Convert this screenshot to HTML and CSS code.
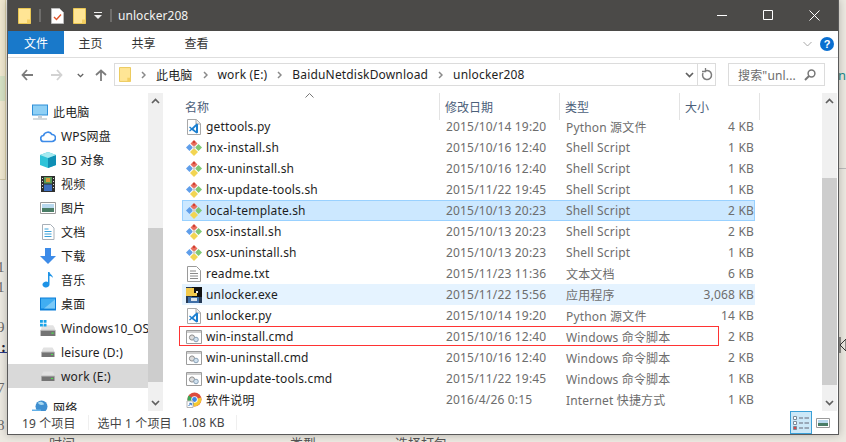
FILE: index.html
```html
<!DOCTYPE html>
<html lang="zh-CN">
<head>
<meta charset="utf-8">
<title>unlocker208</title>
<link rel="stylesheet" href="styles.css">
</head>
<body>
<svg class="defs" width="0" height="0" aria-hidden="true">
  <defs>
    <symbol id="i-folder" viewBox="0 0 13 16"><path d="M.5.5h12v15H.5z" fill="#ffe595" stroke="#e9c652"/><path d="M9 11.5h3.500v4H9z" fill="#f4cf62"/></symbol>
    <symbol id="i-sh" viewBox="0 0 16 16">
      <path d="M8 0 11.500 3.500 8 7 4.500 3.500z" fill="#e8705f"/><path d="M6.500 2 8 .5 9.500 2 8 3.500z" fill="#cf3a2e"/>
      <path d="M3.500 4 7 7.500 3.500 11 0 7.500z" fill="#5f9eea"/>
      <path d="M12.500 4 16 7.500 12.500 11 9 7.500z" fill="#7fc874"/>
      <path d="M8 8 12 12 8 16 4 12z" fill="#f2d552"/><path d="M8 5.500 10 7.500 8 9.500 6 7.500z" fill="#d0d0d0"/>
    </symbol>
    <symbol id="i-py" viewBox="0 0 14 16"><path d="M.5.5h9l4 4v11H.5z" fill="#fff" stroke="#a8a8a8"/><path d="M9 .5v4.500h4.500" fill="#eee" stroke="#a8a8a8"/><path d="M9.500 4.500 4.800 9 3 7.500 2 8.200 3.800 10 2 11.800l1 .7 1.800-1.500 4.700 3.500 1.500-.7V5.300z" fill="#1b7fd0"/><path d="M9 7.500 6.500 10 9 12z" fill="#fff"/></symbol>
    <symbol id="i-txt" viewBox="0 0 14 16"><path d="M.5.5h9l4 4v11H.5z" fill="#fff" stroke="#9a9a9a"/><path d="M3 5h6M3 7.500h8M3 10h8M3 12.500h8" stroke="#8a8a8a"/></symbol>
    <symbol id="i-cmd" viewBox="0 0 16 14"><path d="M.5.500h15v13H.5z" fill="#fff" stroke="#9c9c9c"/><path d="M1 1h14v2H1z" fill="#cfcfcf"/><circle cx="6" cy="7.500" r="2.600" fill="#dcdcdc" stroke="#8d8d8d"/><circle cx="10" cy="9.500" r="2.300" fill="#cfe0ee" stroke="#8aa0b4"/></symbol>
    <symbol id="i-exe" viewBox="0 0 16 16"><path d="M0 0h16v16H0z" fill="#263a55"/><path d="M6 0h10v10H6z" fill="#111"/><path d="M0 1h8v5h3v3H5l-2 0H0z" fill="#f2c94c"/><path d="M2 10h11v6H2z" fill="#3f6fa8"/><path d="M5 11h6v3H5z" fill="#d9e2ea"/><path d="M10 4h2v2h-2z" fill="#eee"/></symbol>
    <symbol id="i-chrome" viewBox="0 0 16 16"><circle cx="8.500" cy="7.500" r="7" fill="#dd4b3e"/><path d="M8.500 7.500 15 5.500A7 7 0 0 1 7 14.300z" fill="#f6c92f"/><path d="M8.500 7.500 7 14.300A7 7 0 0 1 2.700 3.500z" fill="#3aa757"/><circle cx="8.500" cy="7.500" r="3.200" fill="#fff"/><circle cx="8.500" cy="7.500" r="2.400" fill="#3f84e8"/><path d="M1 9h6v6.500H1z" fill="#fff" stroke="#b5b5b5"/><path d="M2.500 14 5 11.500M3.300 11.300H5.300V13.300" stroke="#2a6fc4" fill="none"/></symbol>
    <symbol id="i-drive" viewBox="0 0 14 10"><path d="M1 3 2.500 .5h9L13 3v6.500H1z" fill="#e2e2e2"/><path d="M.5 5h13v5H.5z" fill="#747474"/><path d="M.5 4.500h13v1H.5z" fill="#bdbdbd"/><path d="M10 7h2v1h-2z" fill="#4ee04e"/></symbol>
    <symbol id="i-chev-up" viewBox="0 0 9 6"><path d="M1 5 4.500 1.500 8 5" fill="none" stroke="#606060" stroke-width="1.700"/></symbol>
    <symbol id="i-chev-down" viewBox="0 0 9 6"><path d="M1 1 4.500 4.500 8 1" fill="none" stroke="#606060" stroke-width="1.700"/></symbol>
    <symbol id="i-crumb" viewBox="0 0 5 8"><path d="M1 1 4 4 1 7" fill="none" stroke="#8a8a8a" stroke-width="1.500"/></symbol>
  </defs>
</svg>

<div class="backdrop" aria-hidden="true">
  <span class="bd-panel"></span><span class="bd-green"></span>
  <span class="bd-c bd-1">1</span><span class="bd-c bd-2">1</span><span class="bd-c bd-3">9</span><span class="bd-c bd-4">:</span><span class="bd-c bd-5">7</span><span class="bd-c bd-6">8</span>
  <span class="bd-line"></span>
  <span class="bd-t bd-t1">时间</span><span class="bd-t bd-t2">类型</span><span class="bd-t bd-t3">选择打包</span>
  <span class="bd-teal">n</span><span class="bd-rule"></span>
  <svg class="bd-cursor" viewBox="0 0 8 16"><path d="M1 0v16M1 8l6-6M1 8l6 6M7 2v12" fill="none" stroke="#333"/></svg>
</div>

<div class="window">
  <header class="titlebar">
    <svg class="qa-folder"><use href="#i-folder"/></svg>
    <span class="qa-sep qa-sep-a"></span>
    <svg class="qa-doc" viewBox="0 0 13 16"><path d="M.5.500h8l4 4v11H.5z" fill="#fff" stroke="#bbb"/><path d="M3 9l2.500 2.500L10 6.500" fill="none" stroke="#e0562b" stroke-width="1.400"/></svg>
    <svg class="qa-folder2"><use href="#i-folder"/></svg>
    <svg class="qa-drop" viewBox="0 0 8 7"><path d="M0 0h8v1H0z" fill="#eee"/><path d="M0 3h8L4 7z" fill="#eee"/></svg>
    <span class="qa-sep qa-sep-b"></span>
    <span class="title-text">unlocker208</span>
    <span class="win-btns">
      <svg viewBox="0 0 11 11" class="wb"><path d="M0 5.500h10" stroke="#fff"/></svg>
      <svg viewBox="0 0 11 11" class="wb"><path d="M.5.500h9v9h-9z" fill="none" stroke="#fff"/></svg>
      <svg viewBox="0 0 11 11" class="wb"><path d="M.5.500l10 10M10.500.500l-10 10" stroke="#fff"/></svg>
    </span>
  </header>

  <nav class="tabs">
    <span class="tab tab-file">文件</span>
    <span class="tab">主页</span>
    <span class="tab">共享</span>
    <span class="tab">查看</span>
    <span class="ribbon-right">
      <svg class="ribbon-chev" viewBox="0 0 9 6"><path d="M.5 1 4.500 5 8.500 1" fill="none" stroke="#a8a8a8"/></svg>
      <span class="help">?</span>
    </span>
  </nav>

  <div class="addressbar">
    <svg class="nav-ic nav-back" viewBox="0 0 12 12"><path d="M6 1 1.500 6 6 11M1.500 6H12" fill="none" stroke="#7c7c7c" stroke-width="1.800"/></svg>
    <svg class="nav-ic nav-fwd" viewBox="0 0 12 12"><path d="M6 1 10.500 6 6 11M10.500 6H0" fill="none" stroke="#d2d2d2" stroke-width="1.800"/></svg>
    <svg class="nav-drop"><use href="#i-chev-down"/></svg>
    <svg class="nav-ic nav-up" viewBox="0 0 12 12"><path d="M1 6 6 1.500 11 6M6 1.500V12" fill="none" stroke="#7c7c7c" stroke-width="1.800"/></svg>
    <div class="addr">
      <svg class="addr-folder"><use href="#i-folder"/></svg>
      <svg class="crumb crumb-first"><use href="#i-crumb"/></svg>
      <span>此电脑</span>
      <svg class="crumb"><use href="#i-crumb"/></svg>
      <span>work (E:)</span>
      <svg class="crumb"><use href="#i-crumb"/></svg>
      <span>BaiduNetdiskDownload</span>
      <svg class="crumb"><use href="#i-crumb"/></svg>
      <span>unlocker208</span>
      <svg class="addr-drop"><use href="#i-chev-down"/></svg>
      <span class="addr-refresh"><svg viewBox="0 0 12 13"><path d="M4 3A4.500 4.500 0 1 1 2 5" fill="none" stroke="#7c7c7c" stroke-width="1.500"/><path d="M4.500 0v3.500H1" fill="none" stroke="#7c7c7c" stroke-width="1.300"/></svg></span>
    </div>
    <div class="search">
      <span>搜索"unl...</span>
      <svg viewBox="0 0 12 12"><circle cx="7.500" cy="4.500" r="3.400" fill="none" stroke="#777" stroke-width="1.500"/><path d="M5 7 1 11" stroke="#777" stroke-width="2"/></svg>
    </div>
  </div>

  <div class="content">
    <aside class="sidebar">
      <div class="side side-root"><svg class="s-ic" viewBox="0 0 16 15"><path d="M0 0h16v11H0z" fill="#2f8fd8"/><path d="M1 1h14v9H1z" fill="#8fd0f5"/><path d="M1 14h14v1H1z" fill="#a9b4bb"/><path d="M6 11h4v3H6z" fill="#c9d1d6"/></svg><span>此电脑</span></div>
      <div class="side"><svg class="s-ic" viewBox="0 0 16 13"><path d="M4 12a3 3 0 0 1-.5-6A4.700 4.700 0 0 1 12 5a3.500 3.500 0 0 1 0 7z" fill="none" stroke="#3d8be8" stroke-width="1.700"/></svg><span>WPS网盘</span></div>
      <div class="side"><svg class="s-ic" viewBox="0 0 16 16"><path d="M8 0 16 3v10l-8 3-8-3V3z" fill="#2fc3d8"/><path d="M8 6 16 3v10l-8 3z" fill="#0f8fb5"/><path d="M8 0 16 3 8 6 0 3z" fill="#a5eaf0"/></svg><span>3D 对象</span></div>
      <div class="side"><svg class="s-ic" viewBox="0 0 16 16"><path d="M1 0h14v16H1z" fill="#2f2f2f"/><path d="M4 1h8v6.500H4z" fill="#5a9a58"/><path d="M4 8.500h8V15H4z" fill="#3d6fc0"/><path d="M6 2h4v4H6z" fill="#d99a3a"/><path d="M2 2h1v1H2zM2 5h1v1H2zM2 8h1v1H2zM2 11h1v1H2zM13 2h1v1h-1zM13 5h1v1h-1zM13 8h1v1h-1zM13 11h1v1h-1z" fill="#ddd"/></svg><span>视频</span></div>
      <div class="side"><svg class="s-ic" viewBox="0 0 16 12"><path d="M.5.500h15v11H.5z" fill="#fff" stroke="#9a9a9a"/><path d="M2 2h12v4H2z" fill="#b8d8ee"/><path d="M2 6h12v4H2z" fill="#4a7d66"/></svg><span>图片</span></div>
      <div class="side"><svg class="s-ic" viewBox="0 0 14 16"><path d="M1.500.500h8l3.500 3.500v11.500H1.500z" fill="#fff" stroke="#a8b0b8"/><path d="M3.500 5h4M3.500 7.500h7M3.500 10h7M3.500 12.500h7" stroke="#3aa0d8"/></svg><span>文档</span></div>
      <div class="side"><svg class="s-ic" viewBox="0 0 16 16"><path d="M5 0h6v8h5l-8 8-8-8h5z" fill="#3d8be8"/></svg><span>下载</span></div>
      <div class="side"><svg class="s-ic" viewBox="0 0 16 16"><path d="M8 0h1.500c.3 2.500 3.500 3 3.500 6-1-1.500-2.500-2-3.500-2v8.500a3.500 3 0 1 1-1.500-2.400z" fill="#1e93e6"/></svg><span>音乐</span></div>
      <div class="side"><svg class="s-ic" viewBox="0 0 16 13"><path d="M0 0h16v13H0z" fill="#0c7fd8"/><path d="M1 1h14v10H1z" fill="#41aef2"/><path d="M4 11 15 2v9z" fill="#7dcaf7"/></svg><span>桌面</span></div>
      <div class="side"><svg class="s-ic" viewBox="0 0 14 14"><use href="#i-drive" y="4" height="10"/><path d="M0 0h2.500v2.500H0zM3.200 0h2.500v2.500H3.200zM0 3.200h2.500v2.500H0zM3.200 3.200h2.500v2.500H3.200z" fill="#17a2e8"/></svg><span>Windows10_OS</span></div>
      <div class="side"><svg class="s-ic s-drive" viewBox="0 0 14 10"><use href="#i-drive"/></svg><span>leisure (D:)</span></div>
      <div class="side side-sel"><svg class="s-ic s-drive" viewBox="0 0 14 10"><use href="#i-drive"/></svg><span>work (E:)</span></div>
      <div class="side side-root side-net"><svg class="s-ic" viewBox="0 0 16 15"><circle cx="9.500" cy="6" r="6" fill="#3f8fd0"/><path d="M6 2c3-2 6 0 6 2-3 1-6 0-6-2z" fill="#a8d8f0"/><path d="M0 9h9v5H0z" fill="#62b0e8"/></svg><span>网络</span></div>
    </aside>

    <div class="scrollbar scrollbar-side">
      <svg class="sb-arrow"><use href="#i-chev-up"/></svg>
      <span class="sb-thumb sb-thumb-side"></span>
      <svg class="sb-arrow sb-arrow-down"><use href="#i-chev-down"/></svg>
    </div>

    <main class="files">
      <div class="file-head">
        <span class="col col-name">名称<svg class="sort" viewBox="0 0 9 5"><path d="M.5 4.500 4.500.5 8.500 4.500" fill="none" stroke="#777"/></svg></span>
        <span class="col">修改日期</span>
        <span class="col">类型</span>
        <span class="col col-last">大小</span>
      </div>
      <div class="file-list">
        <div class="row"><span class="n"><svg class="f-ic"><use href="#i-py"/></svg>gettools.py</span><span class="d">2015/10/14 19:20</span><span class="t">Python 源文件</span><span class="s">4 KB</span></div>
        <div class="row"><span class="n"><svg class="f-ic"><use href="#i-sh"/></svg>lnx-install.sh</span><span class="d">2015/10/16 12:40</span><span class="t">Shell Script</span><span class="s">1 KB</span></div>
        <div class="row"><span class="n"><svg class="f-ic"><use href="#i-sh"/></svg>lnx-uninstall.sh</span><span class="d">2015/10/16 12:40</span><span class="t">Shell Script</span><span class="s">1 KB</span></div>
        <div class="row"><span class="n"><svg class="f-ic"><use href="#i-sh"/></svg>lnx-update-tools.sh</span><span class="d">2015/11/22 19:45</span><span class="t">Shell Script</span><span class="s">1 KB</span></div>
        <div class="row row-sel"><span class="n"><svg class="f-ic"><use href="#i-sh"/></svg>local-template.sh</span><span class="d">2015/10/13 20:23</span><span class="t">Shell Script</span><span class="s">2 KB</span></div>
        <div class="row"><span class="n"><svg class="f-ic"><use href="#i-sh"/></svg>osx-install.sh</span><span class="d">2015/10/13 20:23</span><span class="t">Shell Script</span><span class="s">2 KB</span></div>
        <div class="row"><span class="n"><svg class="f-ic"><use href="#i-sh"/></svg>osx-uninstall.sh</span><span class="d">2015/10/13 20:23</span><span class="t">Shell Script</span><span class="s">1 KB</span></div>
        <div class="row"><span class="n"><svg class="f-ic"><use href="#i-txt"/></svg>readme.txt</span><span class="d">2015/11/23 11:36</span><span class="t">文本文档</span><span class="s">6 KB</span></div>
        <div class="row row-hover"><span class="n"><svg class="f-ic"><use href="#i-exe"/></svg>unlocker.exe</span><span class="d">2015/11/22 15:56</span><span class="t">应用程序</span><span class="s">3,068 KB</span></div>
        <div class="row"><span class="n"><svg class="f-ic"><use href="#i-py"/></svg>unlocker.py</span><span class="d">2015/10/14 19:20</span><span class="t">Python 源文件</span><span class="s">14 KB</span></div>
        <div class="row row-mark"><span class="n"><svg class="f-ic"><use href="#i-cmd"/></svg>win-install.cmd</span><span class="d">2015/10/16 12:40</span><span class="t">Windows 命令脚本</span><span class="s">2 KB</span></div>
        <div class="row"><span class="n"><svg class="f-ic"><use href="#i-cmd"/></svg>win-uninstall.cmd</span><span class="d">2015/10/16 12:40</span><span class="t">Windows 命令脚本</span><span class="s">2 KB</span></div>
        <div class="row"><span class="n"><svg class="f-ic"><use href="#i-cmd"/></svg>win-update-tools.cmd</span><span class="d">2015/11/22 19:45</span><span class="t">Windows 命令脚本</span><span class="s">1 KB</span></div>
        <div class="row"><span class="n"><svg class="f-ic"><use href="#i-chrome"/></svg>软件说明</span><span class="d">2016/4/26 0:15</span><span class="t">Internet 快捷方式</span><span class="s">1 KB</span></div>
      </div>
    </main>

    <div class="scrollbar scrollbar-main">
      <svg class="sb-arrow"><use href="#i-chev-up"/></svg>
      <span class="sb-thumb sb-thumb-main"></span>
      <svg class="sb-arrow sb-arrow-down"><use href="#i-chev-down"/></svg>
    </div>
  </div>

  <footer class="status">
    <span class="st st-count">19 个项目</span>
    <span class="st-sep"></span>
    <span class="st st-sel">选中 1 个项目</span>
    <span class="st st-size">1.08 KB</span>
    <span class="st-sep st-sep-b"></span>
    <span class="view-btn view-on"><svg viewBox="0 0 16 14"><path d="M.5.500h3v3h-3zM.5 5.500h3v3h-3z" fill="#fff" stroke="#7a8a99"/><path d="M.5 10.500h3v3h-3z" fill="#d44" stroke="#7a8a99"/><path d="M6 2h4M11.500 2H16M6 7h4M11.500 7H16M6 12h4M11.500 12H16" stroke="#667"/></svg></span>
    <span class="view-btn view-thumb"><svg viewBox="0 0 14 10"><path d="M.5.500h13v9H.5z" fill="#fff" stroke="#9a9a9a"/><path d="M2 2h10v3H2z" fill="#b8d8ee"/><path d="M2 5h10v3H2z" fill="#4a7d66"/></svg></span>
  </footer>
</div>
</body>
</html>
```

FILE: styles.css
```css
* { box-sizing: border-box; }
html, body { margin: 0; height: 100%; }
body {
  position: relative;
  width: 846px;
  height: 442px;
  overflow: hidden;
  background: #ece9e1;
  font-family: "Noto Sans", "Noto Sans CJK SC", sans-serif;
  font-size: 12px;
  color: #1e1e1e;
}
.defs { position: absolute; }
svg { display: block; overflow: hidden; }

/* app visible behind the window */
.backdrop { position: absolute; inset: 0; }
.backdrop > * { position: absolute; }
.bd-panel { left: 0; top: 0; width: 6px; height: 180px; background: #efe7cf; border-right: 1px solid #d9cfa9; border-bottom: 1px solid #cfc6a6; }
.bd-green { left: 0; top: 76px; width: 5px; height: 25px; background: #d5e1c4; }
.bd-c { left: -3px; font: 15px/18px "Liberation Serif", serif; color: #6a6a6a; }
.bd-1 { top: 258px; }
.bd-2 { top: 278px; }
.bd-3 { top: 318px; }
.bd-4 { top: 338px; left: 1px; color: #223; font-weight: 700; }
.bd-5 { top: 379px; }
.bd-6 { top: 416px; }
.bd-line { left: 0; top: 352px; width: 7px; height: 1px; background: #2a3a8a; }
.bd-t { top: 435px; font: 13px/16px "Noto Sans CJK SC", sans-serif; color: #555; }
.bd-t1 { left: 49px; }
.bd-t2 { left: 290px; }
.bd-t3 { left: 395px; }
.bd-teal { left: 838px; top: 66px; font-size: 13px; line-height: 18px; color: #1a8a8a; }
.bd-rule { left: 839px; top: 168px; width: 7px; height: 1px; background: #bbb; }
.bd-cursor { left: 839px; top: 337px; width: 8px; height: 16px; }

/* window */
.window {
  position: absolute;
  left: 7px;
  top: 0;
  width: 832px;
  height: 435px;
  display: flex;
  flex-direction: column;
  background: #fff;
  border: 1px solid #5a5a5a;
  border-top: 0;
  box-shadow: 0 0 8px rgba(0, 0, 0, .25);
}
.titlebar {
  height: 31px;
  flex: none;
  display: flex;
  align-items: center;
  background: #4b4a48;
  color: #f2f2f2;
}
.qa-folder { width: 13px; height: 16px; margin-left: 10px; }
.qa-sep { width: 2px; height: 13px; background: #6e6d6b; }
.qa-sep-a { margin-left: 8px; }
.qa-doc { width: 13px; height: 16px; margin-left: 10px; }
.qa-folder2 { width: 13px; height: 16px; margin-left: 9px; }
.qa-drop { width: 8px; height: 7px; margin-left: 8px; }
.qa-sep-b { margin-left: 8px; }
.title-text { margin-left: 6px; font-size: 12px; letter-spacing: .05px; }
.win-btns { margin-left: auto; display: flex; align-items: center; gap: 35px; padding-right: 18px; }
.wb { width: 11px; height: 11px; }

.tabs {
  height: 26px;
  flex: none;
  display: flex;
  align-items: flex-start;
  border-bottom: 1px solid #dedede;
  box-sizing: content-box;
  padding-bottom: 0;
}
.tab { width: 53px; height: 23px; display: flex; align-items: center; justify-content: center; font-size: 12px; color: #333; }
.tab-file { width: 56px; background: #1979ca; color: #fff; }
.ribbon-right { margin-left: auto; height: 26px; display: flex; align-items: center; gap: 8px; padding: 0 4px 0 0; }
.ribbon-chev { width: 9px; height: 6px; }
.help { width: 14px; height: 14px; border-radius: 50%; background: #0a6fd0; color: #fff; font: 700 11px/14px "Liberation Sans", sans-serif; text-align: center; }

.addressbar {
  height: 35px;
  flex: none;
  display: flex;
  align-items: flex-start;
  padding-top: 5px;
}
.nav-ic { width: 12px; height: 12px; margin-top: 6px; }
.nav-back { margin-left: 13px; }
.nav-fwd { margin-left: 18px; }
.nav-drop { width: 7px; height: 5px; margin: 10px 0 0 14px; }
.nav-up { margin-left: 11px; }
.addr {
  width: 602px;
  height: 23px;
  margin-left: 7px;
  display: flex;
  align-items: center;
  border: 1px solid #dcdcdc;
  color: #1e1e1e;
  letter-spacing: .17px;
}
.addr-folder { width: 12px; height: 15px; margin-left: 4px; flex: none; }
.crumb { width: 5px; height: 8px; margin: 0 10px 0 10px; flex: none; }
.addr-drop { width: 9px; height: 6px; margin-left: auto; margin-right: 3px; }
.addr-refresh { width: 18px; height: 21px; display: flex; align-items: center; justify-content: center; border-left: 1px solid #dcdcdc; }
.addr-refresh svg { width: 12px; height: 13px; }
.search {
  width: 97px;
  height: 23px;
  margin-left: 12px;
  display: flex;
  align-items: center;
  justify-content: space-between;
  padding: 0 8px 0 9px;
  border: 1px solid #dcdcdc;
  color: #6d6d6d;
  letter-spacing: .17px;
}
.search svg { width: 12px; height: 12px; }

.content { height: 318px; flex: none; display: flex; overflow: hidden; }
.sidebar { width: 140px; flex: none; padding-top: 7px; overflow: hidden; }
.side {
  height: 24px;
  display: flex;
  align-items: center;
  padding-left: 32px;
  color: #1e1e1e;
  white-space: nowrap;
  overflow: hidden;
  letter-spacing: .17px;
}
.side-root { padding-left: 24px; }
.side-sel { background: #d9d9d9; }
.side-net { margin-top: 8px; }
.s-ic { width: 16px; height: 16px; margin-right: 5px; flex: none; }
.s-drive { height: 10px; }

.scrollbar {
  width: 15px;
  flex: none;
  display: flex;
  flex-direction: column;
  align-items: center;
  background: #f0f0f0;
}
.scrollbar-side { margin-right: 19px; }
.sb-arrow { width: 9px; height: 6px; margin-top: 5px; flex: none; }
.sb-thumb { width: 15px; background: #cdcdcd; flex: none; }
.sb-thumb-side { height: 154px; margin-top: 124px; }
.sb-thumb-main { height: 207px; margin-top: 74px; }
.sb-arrow-down { margin-top: auto; margin-bottom: 5px; }

.files { width: 640px; flex: none; }
.file-head {
  height: 23px;
  display: grid;
  grid-template-columns: 258px 120px 120px 80px;
  width: 578px;
}
.col {
  height: 27px;
  display: flex;
  align-items: center;
  padding-left: 5px;
  color: #4c607a;
  border-right: 1px solid #e3e3e3;
}
.col-name { position: relative; padding-left: 3px; }
.sort { position: absolute; left: 123px; top: 0; width: 9px; height: 5px; }

.row {
  position: relative;
  width: 573px;
  height: 21px;
  display: grid;
  grid-template-columns: 258px 120px 120px 75px;
  align-items: center;
  border: 1px solid transparent;
  color: #6d6d6d;
  letter-spacing: .17px;
}
.row-sel { background: #cce8ff; border-color: #99d1ff; }
.row-hover { background: #e5f3ff; }
.row-mark::after {
  content: "";
  position: absolute;
  left: -4px;
  right: 35px;
  top: -1px;
  bottom: 0;
  border: 1px solid #f33;
  pointer-events: none;
}
.n { display: flex; align-items: center; color: #1e1e1e; padding-left: 3px; }
.f-ic { width: 16px; height: 16px; margin-right: 4px; flex: none; }
.d { padding-left: 5px; }
.t { padding-left: 5px; }
.s { text-align: right; padding-right: 2px; }

.status {
  height: 23px;
  flex: none;
  display: flex;
  align-items: center;
  color: #444;
  letter-spacing: .12px;
}
.st-count { margin-left: 14px; }
.st-sep { width: 1px; height: 15px; background: #efefef; margin-left: 12px; }
.st-sel { margin-left: 9px; }
.st-size { margin-left: 10px; }
.st-sep-b { margin-left: 11px; }
.view-btn { width: 22px; height: 23px; display: flex; align-items: center; justify-content: center; }
.view-on { margin-left: auto; background: #cce8f8; border: 1px solid #3aa0d8; }
.view-on svg { width: 16px; height: 14px; }
.view-thumb { margin-right: 4px; }
.view-thumb svg { width: 14px; height: 10px; }
```
